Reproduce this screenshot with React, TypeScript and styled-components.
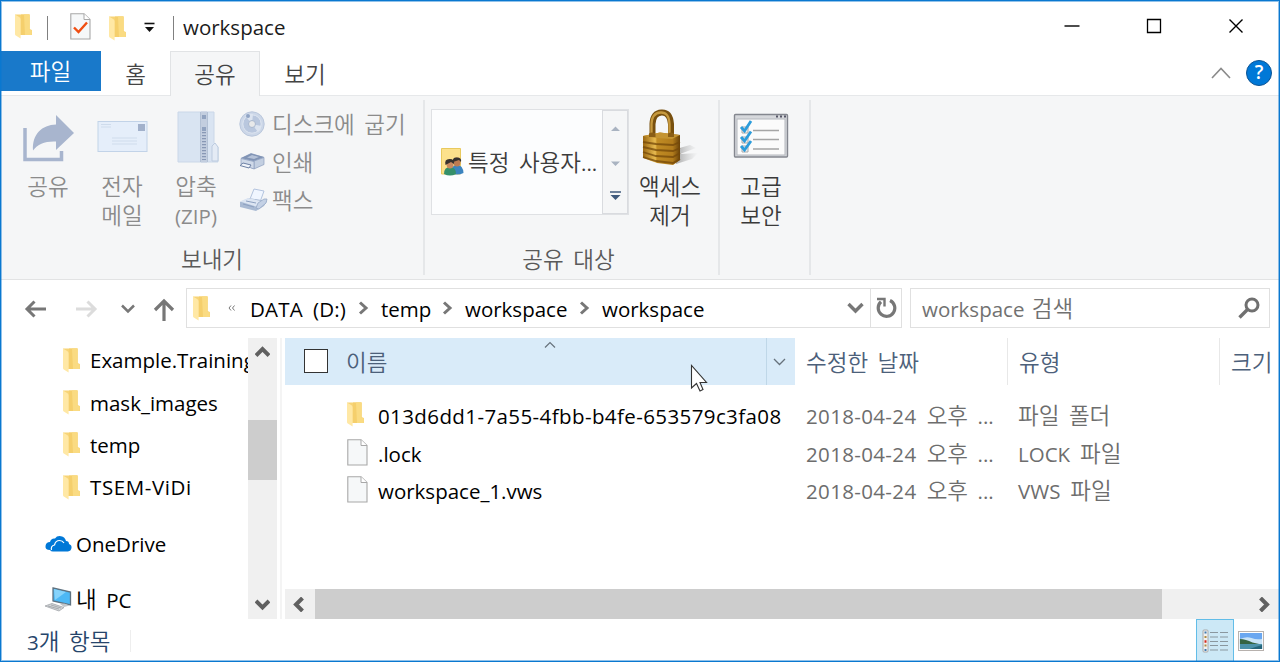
import React from "react";
import styled, { createGlobalStyle } from "styled-components";

const Global = createGlobalStyle`
  * { box-sizing: border-box; }
  body { margin: 0; background: #fff; overflow: hidden; }
`;

const Window = styled.div`
  position: relative;
  width: 1280px;
  height: 662px;
  display: flex;
  flex-direction: column;
  background: #fff;
  overflow: hidden;
  font-family: "Open Sans", "Noto Sans CJK KR", sans-serif;
  font-size: 20.5px;
  line-height: 30px;
  word-spacing: 4.5px;
  color: #000;
  white-space: nowrap;
  &::after {
    content: "";
    position: absolute;
    inset: 0;
    border: 1px solid #0a78d0;
    box-shadow: inset 0 0 0 1px rgba(10, 120, 208, 0.45);
    pointer-events: none;
  }
`;

const Ko = styled.span`
  font-family: "Noto Sans CJK KR", sans-serif;
  font-weight: 350;
  font-size: 22.5px;
  line-height: 20px;
`;

const Latin = styled.span<{ $gap?: number }>`
  letter-spacing: ${(p) => p.$gap ?? 0}px;
`;

const TitleBar = styled.header`
  display: flex;
  height: 51px;
  flex: none;
  padding: 2px 36px 0 15px;
  align-items: center;
`;
const QuickAccess = styled.div`
  display: flex;
  align-items: center;
  width: 168px;
  svg { flex: none; }
`;
const Rule = styled.i<{ $left: number; $right: number }>`
  width: 1px;
  height: 24px;
  background: #808080;
  margin: 2px ${(p) => p.$right}px 0 ${(p) => p.$left}px;
`;
const QuickFolder = styled.span`
  display: flex;
  margin: 3px 0 0 18px;
`;
const QuickMenu = styled.svg`
  margin: 2px 0 0 18px;
`;
const Title = styled.h1`
  margin: 0;
  flex: 1;
  font-size: 20.5px;
  line-height: 30px;
  font-weight: 400;
  color: #1c1c1c;
`;
const Controls = styled.div`
  display: flex;
  width: 180px;
  padding-bottom: 2px;
  justify-content: space-between;
  align-items: center;
`;

const Tabs = styled.nav`
  display: flex;
  flex: none;
  height: 45px;
  box-shadow: inset 0 -1px #e6e8ea;
  padding-right: 8px;
`;
const Tab = styled.div<{ $width: number; $active?: boolean }>`
  width: ${(p) => p.$width}px;
  height: 45px;
  line-height: 46px;
  text-align: center;
  color: #444;
  border: 1px solid ${(p) => (p.$active ? "#e1e3e5" : "transparent")};
  border-bottom: 0;
  background: ${(p) => (p.$active ? "#f5f6f7" : "transparent")};
`;
const FileTab = styled.div`
  width: 101px;
  height: 40px;
  line-height: 43px;
  text-align: center;
  background: #1979ca;
  color: #fff;
`;
const TabTools = styled.div`
  display: flex;
  align-items: center;
  gap: 15px;
  margin-left: auto;
  height: 44px;
`;
const Help = styled.div`
  width: 26px;
  height: 26px;
  border-radius: 50%;
  border: 1.5px solid #0b5394;
  background: #0078d7;
  color: #fff;
  font-size: 19px;
  font-weight: 600;
  line-height: 23px;
  text-align: center;
`;

const Ribbon = styled.section`
  display: flex;
  flex: none;
  height: 184px;
  padding: 4px 0 4px 1px;
  background: #f5f6f7;
  border-bottom: 1px solid #e2e3e4;
`;
const Group = styled.div<{ $width: number }>`
  display: flex;
  flex-direction: column;
  width: ${(p) => p.$width}px;
  border-right: 2px solid #e5e7e9;
`;
const GroupBody = styled.div<{ $left: number }>`
  display: flex;
  height: 147px;
  padding-left: ${(p) => p.$left}px;
`;
const Caption = styled.div<{ $right?: number }>`
  line-height: 27px;
  padding-right: ${(p) => p.$right ?? 0}px;
  text-align: center;
  color: #5a5a5a;
`;
const BigButton = styled.div<{ $width: number; $disabled?: boolean }>`
  width: ${(p) => p.$width}px;
  color: ${(p) => (p.$disabled ? "#8b8b8b" : "#3a3a3a")};
  line-height: 29px;
  text-align: center;
`;
const BigIcon = styled.div<{ $top: number; $left?: number }>`
  display: flex;
  justify-content: center;
  align-items: flex-start;
  height: 73px;
  padding: ${(p) => p.$top}px 0 0 ${(p) => p.$left ?? 0}px;
`;
const SmallButtons = styled.div`
  display: flex;
  flex-direction: column;
  padding: 5px 0 0 6px;
`;
const SmallButton = styled.div`
  display: flex;
  align-items: center;
  height: 38px;
  color: #8b8b8b;
`;
const SmallIcon = styled.span`
  display: flex;
  width: 33px;
  flex: none;
`;
const SmallLabel = styled.span`
  padding-top: 1px;
`;
const Gallery = styled.div`
  display: flex;
  width: 198px;
  height: 106px;
  margin-top: 9px;
  border: 1px solid #dfe1e4;
  background: #fcfdfe;
`;
const GalleryItem = styled.div`
  display: flex;
  align-items: center;
  gap: 4px;
  width: 171px;
  padding-left: 9px;
  color: #3c3c3c;
`;
const Spinner = styled.div`
  display: flex;
  flex-direction: column;
  align-items: center;
  width: 26px;
  padding-top: 15px;
  background: #f5f6f7;
  border: 1px solid #d9dbdf;
`;

const AddressRow = styled.div`
  display: flex;
  flex: none;
  height: 58px;
  padding: 8px 10px 0 24px;
`;
const NavButtons = styled.div`
  display: flex;
  align-items: center;
  width: 162px;
  height: 42px;
`;
const Forward = styled.svg`
  margin-left: 28px;
`;
const History = styled.svg`
  margin-left: 23px;
`;
const Up = styled.svg`
  margin-left: 18px;
`;
const PathBox = styled.div`
  display: flex;
  align-items: center;
  width: 716px;
  height: 40px;
  padding-left: 6px;
  border: 1px solid #e0e0e0;
`;
const Overflow = styled.svg`
  margin: 0 14px 0 18px;
`;
const Crumb = styled.span<{ $width: number }>`
  width: ${(p) => p.$width}px;
  line-height: 38px;
  padding-top: 2px;
`;
const CrumbArrow = styled.svg`
  margin-right: 12px;
`;
const PathEnd = styled.div`
  display: flex;
  align-items: center;
  height: 38px;
  margin-left: auto;
`;
const Refresh = styled.div`
  display: flex;
  align-items: center;
  justify-content: center;
  width: 31px;
  height: 38px;
  margin-left: 6px;
  border-left: 1px solid #e0e0e0;
`;
const Search = styled.div`
  display: flex;
  align-items: center;
  justify-content: space-between;
  width: 360px;
  height: 40px;
  margin-left: 8px;
  padding: 0 9px 0 11px;
  border: 1px solid #e0e0e0;
  color: #717171;
  word-spacing: 2px;
`;
const Placeholder = styled.span`
  padding-top: 2px;
`;

const Body = styled.main`
  display: flex;
  flex: none;
  height: 281px;
`;
const Tree = styled.aside`
  width: 248px;
  overflow: hidden;
  padding-top: 1px;
`;
const TreeItem = styled.div<{ $indent: number; $height: number; $gap: number }>`
  display: flex;
  align-items: center;
  height: ${(p) => p.$height}px;
  padding-left: ${(p) => p.$indent}px;
  gap: ${(p) => p.$gap}px;
  svg { flex: none; }
`;
const VScroll = styled.div`
  display: flex;
  flex-direction: column;
  align-items: center;
  width: 29px;
  padding: 8px 0;
  background: #f0f0f0;
`;
const VThumb = styled.div`
  width: 29px;
  height: 60px;
  margin: 62px 0 auto;
  background: #cdcdcd;
`;
const Splitter = styled.div`
  width: 2px;
  margin: 0 3px;
  background: #f4f4f4;
`;
const Files = styled.section`
  display: flex;
  flex-direction: column;
  width: 994px;
`;
const HeadRow = styled.div`
  display: flex;
  height: 47px;
  margin-bottom: 12px;
  color: #4c607a;
  line-height: 50px;
`;
const NameHead = styled.div`
  position: relative;
  display: flex;
  align-items: center;
  width: 510px;
  height: 47px;
  padding-left: 19px;
  background: #d9ebf9;
`;
const CheckBox = styled.span`
  width: 24px;
  height: 24px;
  margin: 0 18px 2px 0;
  border: 1.5px solid #333;
  background: #fff;
`;
const HeadLabel = styled.span`
  padding-top: 2px;
`;
const SortMark = styled.svg`
  position: absolute;
  left: 259px;
  top: 3px;
`;
const Filter = styled.div`
  display: flex;
  align-items: center;
  justify-content: center;
  width: 29px;
  height: 47px;
  margin-left: auto;
  padding-right: 4px;
  border-left: 1px solid #bfd7e8;
`;
const Head = styled.div<{ $width: number }>`
  width: ${(p) => p.$width}px;
  padding-left: 11px;
  border-right: 1px solid #e8e8e8;
`;
const LastHead = styled.div`
  padding-left: 11px;
`;
const FileRow = styled.div`
  display: flex;
  align-items: center;
  height: 37.7px;
  color: #6d6d6d;
`;
const NameCell = styled.div`
  display: flex;
  align-items: center;
  width: 521px;
  padding-left: 62px;
  color: #000;
`;
const IconSlot = styled.span`
  display: flex;
  width: 31px;
  margin-top: -3px;
`;
const DateCell = styled.div`
  width: 212px;
`;
const HScroll = styled.div`
  display: flex;
  align-items: center;
  height: 30px;
  margin-top: auto;
  padding: 0 8px 0 7px;
  background: #f0f0f0;
`;
const HThumb = styled.div`
  width: 847px;
  height: 30px;
  margin: 0 auto 0 11px;
  background: #cdcdcd;
`;
const Pointer = styled.svg`
  position: absolute;
  left: 690px;
  top: 364px;
`;

const StatusBar = styled.footer`
  display: flex;
  flex: 1;
  align-items: center;
  padding: 0 16px 0 27px;
  color: #26456b;
`;
const StatusText = styled.div`
  width: 104px;
  height: 22px;
  line-height: 22px;
  border-right: 1px solid #eee;
`;
const ViewButton = styled.div`
  display: flex;
  align-items: center;
  justify-content: center;
  width: 38px;
  height: 43px;
  margin: 0 4px 0 auto;
  background: #cce8f6;
  border: 1px solid #62bde8;
`;

const Folder = () => (
  <svg width="17" height="25" viewBox="0 0 17 25">
    <path d="M0 .5H14.5V15.5L16.8 16V21H5Z" fill="#f7d477" />
    <path d="M6 .5H14.5V15.5L16.8 16V21H6Z" fill="#f5cf6c" />
    <path d="M9 .5H14.5V15.5L16.8 16V21H10Z" fill="#fadb82" />
    <path d="M0 .5 4.5 3.2Q5.6 4 5.6 5.5V24.5L.8 21.5Q0 21 0 20Z" fill="#ffe8a5" />
  </svg>
);

const Page = ({ checked }: { checked?: boolean }) => (
  <svg width="21" height="27" viewBox="0 0 21 27">
    <path d="M.8.8H14L20 6.5V26H.8Z" fill="#f6f8f9" stroke="#a8a8a8" strokeWidth="1.1" />
    <path d="M14 .8V6.5H20" fill="#fff" stroke="#a8a8a8" />
    {checked && <path d="M4 14.5 8.5 19 17 9.5" fill="none" stroke="#f04e12" strokeWidth="2.4" />}
  </svg>
);

const ShareIcon = () => (
  <svg width="52" height="50" viewBox="0 0 52 50">
    <path d="M2 15V46.5H38.5V38" fill="none" stroke="#a8b5ce" strokeWidth="3.5" />
    <path d="M33 2 51 20 33 37V28.500C22 28 15 31 10 37.500C9 21 19 12 33 11.500Z" fill="#a8b5ce" />
  </svg>
);

const MailIcon = () => (
  <svg width="52" height="50" viewBox="0 0 52 50">
    <rect x="1" y="9.500" width="49" height="30" fill="#e5eefa" stroke="#c2d3e8" />
    <rect x="41" y="12" width="7" height="7" fill="#a2b1cb" />
    <path d="M4 12.500H14M4 15H14M15 26H40M15 29H40M15 32H40" stroke="#cfdcec" />
  </svg>
);

const ZipIcon = () => (
  <svg width="44" height="56" viewBox="0 0 44 56">
    <path d="M2 2H38V33L42 37V52H2Z" fill="#d9e4f2" stroke="#cad7e8" />
    <path d="M36 51V36L39 33 42 37V51Z" fill="#e4ebf5" stroke="#bccbdf" />
    <rect x="25" y="1.500" width="6" height="51" fill="#c3cedf" />
    <path d="M28 22V50" stroke="#8898b5" strokeWidth="4" strokeDasharray="1.200 1.800" />
    <path d="M26 5H30V9H26ZM26 17H30V21H26Z" fill="#91a3c0" />
    <path d="M24.500 2V52M31.500 2V52" stroke="#b3c1d5" />
  </svg>
);

const DiscIcon = () => (
  <svg width="26" height="28" viewBox="0 0 26 28">
    <circle cx="13" cy="14" r="12.200" fill="#ccd7e8" stroke="#bac7dc" />
    <circle cx="13" cy="14" r="9.200" fill="#b9c7de" stroke="#dfe6f1" />
    <path d="M13 14 6 5.500Q10 3 14 4ZM13 14 19 22Q22 20 22.500 16Z" fill="#dce4f0" />
    <circle cx="13" cy="14" r="3.500" fill="#e8e9ea" stroke="#a9b8cf" />
    <circle cx="9" cy="6" r="2" fill="#90a4c4" />
  </svg>
);

const PrinterIcon = () => (
  <svg width="26" height="20" viewBox="0 0 26 20">
    <path d="M2 6 12 1 25 5V12L14 17 2 12Z" fill="#a6b5cf" />
    <path d="M2 6 12 1.500 25 5 15 9Z" fill="#8194b5" />
    <path d="M8 5.500 13 3 20 5 15 7Z" fill="#b5c2d8" />
    <path d="M15 9 25 5.500V12.500L15 17Z" fill="#c3cfe1" stroke="#8d9ebd" strokeWidth=".7" />
    <path d="M2 6.500 15 9.500V17L2 12Z" fill="#cfd9e8" stroke="#8d9ebd" strokeWidth=".7" />
    <path d="M1 13.500 4 11 12 13 10 16Z" fill="#f0f4fa" stroke="#6c80a4" />
  </svg>
);

const FaxIcon = () => (
  <svg width="29" height="24" viewBox="0 0 29 24">
    <path d="M11 11 15 1 25 3 21 14Z" fill="#f0f6ff" stroke="#b3c4de" />
    <path d="M1 14 10 10 28 13 25 18 17 23 1 19Z" fill="#a9bad3" />
    <path d="M1 13.500 9 10 22 13 17 18.500Z" fill="#dce5f2" />
    <path d="M19 15 25 11 28 11 27 15 20 21 17 20Z" fill="#c4d1e5" stroke="#97a9c7" strokeWidth=".8" />
    <path d="M4 16 15 19M7 13 17 15" stroke="#8da0c0" />
  </svg>
);

const UsersIcon = () => (
  <svg width="23" height="28" viewBox="0 0 23 28">
    <path d="M.5.5H19.500V26H.5Z" fill="#fce18c" stroke="#e8c95e" />
    <path d="M10 25Q10 17 16 17T22.500 25Q16 28 10 25Z" fill="#3c84bf" />
    <ellipse cx="16" cy="14" rx="3.500" ry="4.500" fill="#bd7b52" />
    <path d="M12 14Q11 9 16 9.500 21 9.500 20 14L18 12Z" fill="#37322e" />
    <path d="M3 26Q3 19 9 19T15 26Q9 29 3 26Z" fill="#35906a" />
    <ellipse cx="9" cy="16" rx="3.500" ry="4.500" fill="#c98a60" />
    <path d="M4.500 17Q3 11 8.500 11 14 11 13 16L10 14Z" fill="#37322e" />
  </svg>
);

const LockIcon = () => (
  <svg width="56" height="58" viewBox="0 0 56 58">
    <defs>
      <linearGradient id="brass">
        <stop offset="0" stopColor="#9b6812" />
        <stop offset=".33" stopColor="#e8bb50" />
        <stop offset=".38" stopColor="#c18c24" />
        <stop offset=".8" stopColor="#b27c1c" />
        <stop offset="1" stopColor="#694208" />
      </linearGradient>
      <linearGradient id="lockShade">
        <stop offset="0" stopColor="#777" stopOpacity=".6" />
        <stop offset="1" stopColor="#aaa" stopOpacity="0" />
      </linearGradient>
    </defs>
    <path d="M34 40 48 36 54 39 38 45 56 44 50 50 34 55Z" fill="url(#lockShade)" />
    <path d="M10.500 28V15Q11 4 19.500 3.500T29 15V28" fill="none" stroke="#78500f" strokeWidth="6" />
    <path d="M9.500 28V15Q10 4 18.500 3.500T27.500 15V28" fill="none" stroke="#c6993e" strokeWidth="2.300" />
    <path d="M1 27 18 23.500 38 26V51L31 56 15 54 1 49Z" fill="url(#brass)" />
    <path d="M1 27 18 23.500 38 26 30 30 14 29Z" fill="#c49432" />
    <path d="M7 28V24.500Q10 22.500 13.500 24.500V28ZM26 28V24.500Q29 22.500 32 24.500V28Z" fill="#8a5e16" />
    <path d="M1 33 14 35 31 36 38 33M1 38 14 41 31 42 38 39M1 43 14 47 31 48 38 44M1 48 14 52 31 54 38 50" fill="none" stroke="#74480a" strokeOpacity=".75" strokeWidth="1.800" />
  </svg>
);

const ChecklistIcon = () => (
  <svg width="56" height="46" viewBox="0 0 56 46">
    <rect x="1.500" y="1.500" width="53" height="42.500" rx="1" fill="#d6d8dc" stroke="#84878f" strokeWidth="1.400" />
    <rect x="4" y="6" width="48" height="36" fill="#fbfbfb" stroke="#b4b7bd" />
    <path d="M43 3.500H45M47 3.500H49M51 3.500H53" stroke="#556" strokeWidth="2" />
    <path d="M20 17.500H46M20 26.500H46M20 36H46" stroke="#a5a5a5" strokeWidth="1.500" />
    <path d="M9 14H15V20H9ZM9 24H15V30H9ZM9 33H15V39H9Z" fill="#eee" stroke="#aaa" />
    <path d="M8 14 11.500 18 18 8M8 24 11.500 28 18 18.500M8 33 11.500 37 18 28" fill="none" stroke="#2c9cdb" strokeWidth="2.800" />
  </svg>
);

const CloudIcon = () => (
  <svg width="27" height="18" viewBox="0 0 27 18">
    <path d="M5 15Q0 15 .5 11T5 7Q6 3 10 3.500 12 .5 16 1.200 20 2 21 6 24 6 24 9 27 10 26.500 13T23 16.500H8Q6 16.500 5 15Z" fill="#0078d7" />
    <path d="M6.500 15Q5.500 11 9.500 10 10.500 5.500 14.500 5.500 17.500 5.500 19 8" fill="none" stroke="#fff" strokeWidth="1.200" />
  </svg>
);

const PcIcon = () => (
  <svg width="27" height="25" viewBox="0 0 27 25">
    <path d="M8 1 25.500 5V18L8 14Z" fill="#4db8f5" stroke="#5f7280" strokeWidth="1.300" />
    <path d="M9 2 21 5 10 13Z" fill="#86d3fb" />
    <path d="M15 17 19 16.500 25 18.500 19 20Z" fill="#c2c7cb" />
    <path d="M0 19 7 16.500 19 20.500 14 24Z" fill="#d4d6d8" stroke="#a1a5a9" strokeWidth=".8" />
    <path d="M3 19 14 22M6 18 16 21" stroke="#9a9fa4" strokeWidth=".8" />
  </svg>
);

const DetailsIcon = () => (
  <svg width="27" height="24" viewBox="0 0 27 24">
    <path d="M8 3.500H16M18 3.500H26M8 8H16M18 8H26M8 12.500H16M18 12.500H26M8 16.500H16M18 16.500H26M8 21H16M18 21H26" stroke="#8a979f" strokeWidth="1.200" />
    <rect x="1" y="1" width="5" height="22" rx="1" fill="#f1f1f1" stroke="#aaa" />
    <path d="M2.500 3.500H4.500M2.500 21H4.500" stroke="#3c78ae" strokeWidth="2" />
    <path d="M2.500 8H4.500M2.500 16.500H4.500" stroke="#b08b3e" strokeWidth="2" />
    <path d="M2.500 12.500H4.500" stroke="#d3271c" strokeWidth="2.500" />
  </svg>
);

const PhotoIcon = () => (
  <svg width="26" height="20" viewBox="0 0 27 20" preserveAspectRatio="none">
    <rect x=".5" y=".5" width="26" height="19" fill="#fff" stroke="#b7b1ad" />
    <rect x="2" y="2" width="23" height="16" fill="#6aa7f0" />
    <path d="M2 8Q9 5 14 7T25 8V13H2Z" fill="#c8e3f7" />
    <path d="M2 8Q8 8 15 11.500L22 13H2Z" fill="#356442" />
    <path d="M2 13H25V18H2Z" fill="#4b91a8" />
    <path d="M12 18Q18 16 25 14V18Z" fill="#23647a" />
  </svg>
);

type ChevronProps = { d: string; w: number; h: number; color?: string; stroke?: number };
const Chevron = ({ d, w, h, color = "#606060", stroke = 3.6 }: ChevronProps) => (
  <svg width={w} height={h} viewBox={`0 0 ${w} ${h}`}>
    <path d={d} fill="none" stroke={color} strokeWidth={stroke} />
  </svg>
);

const crumbs = [
  { label: "DATA (D:)", width: 108, gap: 0.2 },
  { label: "temp", width: 61, gap: 0 },
  { label: "workspace", width: 114, gap: 0 },
];

const folders = [
  { name: "Example.Training", gap: 0 },
  { name: "mask_images", gap: 0 },
  { name: "temp", gap: 0 },
  { name: "TSEM-ViDi", gap: 0.6 },
];

const files = [
  { name: "013d6dd1-7a55-4fbb-b4fe-653579c3fa08", gap: 0.4, folder: true, type: <Ko>파일 폴더</Ko> },
  { name: ".lock", gap: 0, type: <>LOCK <Ko>파일</Ko></> },
  { name: "workspace_1.vws", gap: 0, type: <>VWS <Ko>파일</Ko></> },
];

export default function App() {
  return (
    <Window>
      <Global />
      <TitleBar>
        <QuickAccess>
          <Folder />
          <Rule $left={15} $right={22} />
          <Page checked />
          <QuickFolder><Folder /></QuickFolder>
          <QuickMenu width="11" height="11" viewBox="0 0 11 11">
            <path d="M.5 1.500H10.500" stroke="#111" strokeWidth="1.600" />
            <path d="M1 5H10L5.500 10Z" fill="#111" />
          </QuickMenu>
          <Rule $left={18} $right={0} />
        </QuickAccess>
        <Title>workspace</Title>
        <Controls>
          <Chevron w={16} h={16} d="M.5 8H15.500" color="#000" stroke={1.4} />
          <Chevron w={16} h={16} d="M1.500 1.500H14.500V14.500H1.500Z" color="#000" stroke={1.3} />
          <Chevron w={16} h={16} d="M1.500 1.500 14.500 14.500M14.500 1.500 1.500 14.500" color="#000" stroke={1.4} />
        </Controls>
      </TitleBar>

      <Tabs>
        <FileTab><Ko>파일</Ko></FileTab>
        <Tab $width={69}><Ko>홈</Ko></Tab>
        <Tab $width={90} $active><Ko>공유</Ko></Tab>
        <Tab $width={90}><Ko>보기</Ko></Tab>
        <TabTools>
          <Chevron w={20} h={12} d="M1 11 10 1.500 19 11" color="#8a8a8a" stroke={1.6} />
          <Help>?</Help>
        </TabTools>
      </Tabs>

      <Ribbon>
        <Group $width={424}>
          <GroupBody $left={10}>
            <BigButton $width={74} $disabled>
              <BigIcon $top={13} $left={2}><ShareIcon /></BigIcon>
              <Ko>공유</Ko>
            </BigButton>
            <BigButton $width={74} $disabled>
              <BigIcon $top={12} $left={2}><MailIcon /></BigIcon>
              <Ko>전자<br />메일</Ko>
            </BigButton>
            <BigButton $width={74} $disabled>
              <BigIcon $top={10} $left={3}><ZipIcon /></BigIcon>
              <Ko>압축</Ko><br />
              <Latin>(ZIP)</Latin>
            </BigButton>
            <SmallButtons>
              <SmallButton><SmallIcon><DiscIcon /></SmallIcon><SmallLabel><Ko>디스크에 굽기</Ko></SmallLabel></SmallButton>
              <SmallButton><SmallIcon><PrinterIcon /></SmallIcon><SmallLabel><Ko>인쇄</Ko></SmallLabel></SmallButton>
              <SmallButton><SmallIcon><FaxIcon /></SmallIcon><SmallLabel><Ko>팩스</Ko></SmallLabel></SmallButton>
            </SmallButtons>
          </GroupBody>
          <Caption><Ko>보내기</Ko></Caption>
        </Group>
        <Group $width={295}>
          <GroupBody $left={6}>
            <Gallery>
              <GalleryItem>
                <UsersIcon />
                <SmallLabel><Ko>특정 사용자</Ko>...</SmallLabel>
              </GalleryItem>
              <Spinner>
                <svg width="11" height="75" viewBox="0 0 11 75">
                  <path d="M1 5H10L5.500 .5ZM1 35.500H10L5.500 40Z" fill="#a9b3c1" />
                  <path d="M0 66H11" stroke="#3f5a7d" strokeWidth="1.500" />
                  <path d="M.5 69H10.500L5.500 74Z" fill="#3f5a7d" />
                </svg>
              </Spinner>
            </Gallery>
            <BigButton $width={82}>
              <BigIcon $top={9}><LockIcon /></BigIcon>
              <Ko>액세스<br />제거</Ko>
            </BigButton>
          </GroupBody>
          <Caption $right={6}><Ko>공유 대상</Ko></Caption>
        </Group>
        <Group $width={91}>
          <GroupBody $left={0}>
            <BigButton $width={82}>
              <BigIcon $top={13}><ChecklistIcon /></BigIcon>
              <Ko>고급<br />보안</Ko>
            </BigButton>
          </GroupBody>
        </Group>
      </Ribbon>

      <AddressRow>
        <NavButtons>
          <Chevron w={23} h={20} d="M22 10H3M10.500 2.500 3 10 10.500 17.500" color="#777" stroke={3} />
          <Forward width="23" height="20" viewBox="0 0 23 20">
            <path d="M1 10H20M12.500 2.500 20 10 12.500 17.500" fill="none" stroke="#dcdcdc" strokeWidth="3" />
          </Forward>
          <History width="14" height="10" viewBox="0 0 14 10">
            <path d="M1 1.500 7 7.500 13 1.500" fill="none" stroke="#777" strokeWidth="2.500" />
          </History>
          <Up width="22" height="23" viewBox="0 0 22 23">
            <path d="M11 23V3M2 12 11 3 20 12" fill="none" stroke="#777" strokeWidth="3.200" />
          </Up>
        </NavButtons>
        <PathBox>
          <Folder />
          <Overflow width="8" height="6" viewBox="0 0 8 6">
            <path d="M3 .5 1 3 3 5.500M6.500 .5 4.500 3 6.500 5.500" fill="none" stroke="#777" strokeWidth="1" />
          </Overflow>
          {crumbs.map((c) => (
            <React.Fragment key={c.label}>
              <Crumb $width={c.width}><Latin $gap={c.gap}>{c.label}</Latin></Crumb>
              <CrumbArrow width="11" height="14" viewBox="0 0 11 14">
                <path d="M2 1.500 8 7 2 12.500" fill="none" stroke="#777" strokeWidth="3" />
              </CrumbArrow>
            </React.Fragment>
          ))}
          <Crumb $width={110}>workspace</Crumb>
          <PathEnd>
            <Chevron w={17} h={12} d="M1.500 2 8.500 9 15.500 2" color="#777" stroke={3.4} />
            <Refresh>
              <svg width="21" height="22" viewBox="0 0 21 22">
                <path d="M14 3.500A8.300 8.300 0 1 1 5 4.800" fill="none" stroke="#777" strokeWidth="3.200" />
                <path d="M1 2H8.500V9.500" fill="none" stroke="#777" strokeWidth="2.400" />
              </svg>
            </Refresh>
          </PathEnd>
        </PathBox>
        <Search>
          <Placeholder>workspace <Ko>검색</Ko></Placeholder>
          <svg width="22" height="22" viewBox="0 0 22 22">
            <circle cx="14" cy="8" r="6" fill="none" stroke="#707070" strokeWidth="3" />
            <path d="M10 12 1.500 20.500" stroke="#707070" strokeWidth="3.400" />
          </svg>
        </Search>
      </AddressRow>

      <Body>
        <Tree>
          {folders.map((f) => (
            <TreeItem key={f.name} $indent={63} $height={42.4} $gap={10}>
              <Folder />
              <Latin $gap={f.gap}>{f.name}</Latin>
            </TreeItem>
          ))}
          <TreeItem $indent={45} $height={70} $gap={4}><CloudIcon />OneDrive</TreeItem>
          <TreeItem $indent={45} $height={42} $gap={4}><PcIcon /><span><Ko>내 </Ko>PC</span></TreeItem>
        </Tree>
        <VScroll>
          <Chevron w={15} h={12} d="M1 9.500 7.500 3 14 9.500" stroke={4} />
          <VThumb />
          <Chevron w={15} h={12} d="M1 2 7.500 8.500 14 2" stroke={4} />
        </VScroll>
        <Splitter />
        <Files>
          <HeadRow>
            <NameHead>
              <CheckBox />
              <HeadLabel><Ko>이름</Ko></HeadLabel>
              <SortMark width="12" height="8" viewBox="0 0 12 8">
                <path d="M1 6.500 6 1.500 11 6.500" fill="none" stroke="#67727c" strokeWidth="1.200" />
              </SortMark>
              <Filter><Chevron w={13} h={8} d="M1 1 6.500 6.500 12 1" color="#67727c" stroke={1.3} /></Filter>
            </NameHead>
            <Head $width={213}><Ko>수정한 날짜</Ko></Head>
            <Head $width={212}><Ko>유형</Ko></Head>
            <LastHead><Ko>크기</Ko></LastHead>
          </HeadRow>
          {files.map((f) => (
            <FileRow key={f.name}>
              <NameCell>
                <IconSlot>{f.folder ? <Folder /> : <Page />}</IconSlot>
                <Latin $gap={f.gap}>{f.name}</Latin>
              </NameCell>
              <DateCell><Latin $gap={0.35}>2018-04-24 </Latin><Ko>오후 </Ko>...</DateCell>
              <div>{f.type}</div>
            </FileRow>
          ))}
          <HScroll>
            <Chevron w={12} h={15} d="M10.500 1 4 7.500 10.500 14" stroke={4} />
            <HThumb />
            <Chevron w={12} h={15} d="M1.500 1 8 7.500 1.500 14" stroke={4} />
          </HScroll>
        </Files>
      </Body>

      <StatusBar>
        <StatusText>3<Ko>개 항목</Ko></StatusText>
        <ViewButton><DetailsIcon /></ViewButton>
        <PhotoIcon />
      </StatusBar>

      <Pointer width="18" height="29" viewBox="0 0 18 29">
        <path d="M1.500 1.500V24L6.500 19.500 10 27 13 25.500 10 18.500H16.500Z" fill="#fff" stroke="#333" strokeWidth="1.100" />
      </Pointer>
    </Window>
  );
}
